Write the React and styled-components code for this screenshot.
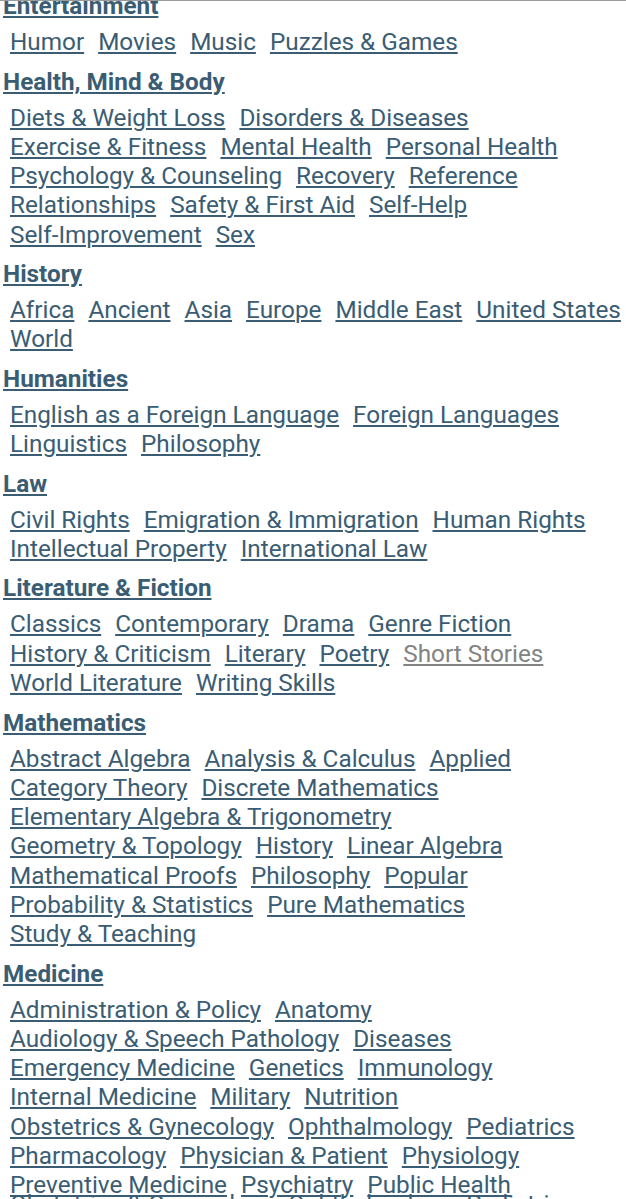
import styled, { createGlobalStyle } from 'styled-components';

const sections = [
  { title: 'Entertainment', links: ['Humor', 'Movies', 'Music', 'Puzzles & Games'] },
  {
    title: 'Health, Mind & Body',
    links: [
      'Diets & Weight Loss', 'Disorders & Diseases', 'Exercise & Fitness', 'Mental Health',
      'Personal Health', 'Psychology & Counseling', 'Recovery', 'Reference', 'Relationships',
      'Safety & First Aid', 'Self-Help', 'Self-Improvement', 'Sex'
    ]
  },
  {
    title: 'History',
    links: ['Africa', 'Ancient', 'Asia', 'Europe', 'Middle East', 'United States', 'World']
  },
  {
    title: 'Humanities',
    links: ['English as a Foreign Language', 'Foreign Languages', 'Linguistics', 'Philosophy']
  },
  {
    title: 'Law',
    links: ['Civil Rights', 'Emigration & Immigration', 'Human Rights', 'Intellectual Property', 'International Law']
  },
  {
    title: 'Literature & Fiction',
    links: [
      'Classics', 'Contemporary', 'Drama', 'Genre Fiction', 'History & Criticism', 'Literary',
      'Poetry', { label: 'Short Stories', visited: true }, 'World Literature', 'Writing Skills'
    ]
  },
  {
    title: 'Mathematics',
    links: [
      'Abstract Algebra', 'Analysis & Calculus', 'Applied', 'Category Theory', 'Discrete Mathematics',
      'Elementary Algebra & Trigonometry', 'Geometry & Topology', 'History', 'Linear Algebra',
      'Mathematical Proofs', 'Philosophy', 'Popular', 'Probability & Statistics', 'Pure Mathematics',
      'Study & Teaching'
    ]
  },
  {
    title: 'Medicine',
    links: [
      'Administration & Policy', 'Anatomy', 'Audiology & Speech Pathology', 'Diseases',
      'Emergency Medicine', 'Genetics', 'Immunology', 'Internal Medicine', 'Military', 'Nutrition',
      'Obstetrics & Gynecology', 'Ophthalmology', 'Pediatrics', 'Pharmacology', 'Physician & Patient',
      'Physiology', 'Preventive Medicine', 'Psychiatry', 'Public Health', 'Radiology', 'Reference',
      'Research', 'Surgery'
    ]
  }
];

const GlobalStyle = createGlobalStyle`
  html, body {
    margin: 0;
    padding: 0;
    background: #fff;
  }
  body {
    font-family: Roboto, "Liberation Sans", sans-serif;
    height: 1199px;
    overflow: hidden;
    border-top: 1px solid #9a9a9a;
    box-sizing: border-box;
  }
`;

const Page = styled.div`
  position: relative;
  margin-top: -10px;
  padding: 0 3px 0 3px;
  color: #3a5d74;
`;

const Section = styled.section`
  margin-bottom: 10.3px;
`;

const Heading = styled.a`
  display: inline-block;
  font-size: 24.3px;
  font-weight: 700;
  line-height: 29px;
  color: inherit;
  text-decoration: underline;
  text-decoration-thickness: 2px;
  text-underline-offset: 2px;
  margin-bottom: 7px;
`;

const LinkList = styled.div`
  display: flex;
  flex-wrap: wrap;
  column-gap: 14px;
  padding-left: 7px;
`;

const Link = styled.a`
  font-size: 24.3px;
  line-height: 29.25px;
  color: ${(p) => (p.$visited ? '#838383' : 'inherit')};
  text-decoration: underline;
  text-decoration-thickness: 2px;
  text-underline-offset: 2px;
  white-space: nowrap;
`;

// stitched duplicate row peeking in at the bottom edge of the capture
const Ghost = styled.div`
  position: absolute;
  left: 0;
  right: 0;
  top: 1197.5px;
  padding-left: 10px;
  display: flex;
  column-gap: 14px;
`;

export default function App() {
  return (
    <>
      <GlobalStyle />
      <Page>
        {sections.map((s) => (
          <Section key={s.title}>
            <Heading>{s.title}</Heading>
            <LinkList>
              {s.links.map((l) => {
                const item = typeof l === 'string' ? { label: l } : l;
                return (
                  <Link key={item.label} $visited={item.visited}>
                    {item.label}
                  </Link>
                );
              })}
            </LinkList>
          </Section>
        ))}
        <Ghost>
          <Link>Obstetrics &amp; Gynecology</Link>
          <Link>Ophthalmology</Link>
          <Link>Pediatrics</Link>
        </Ghost>
      </Page>
    </>
  );
}
